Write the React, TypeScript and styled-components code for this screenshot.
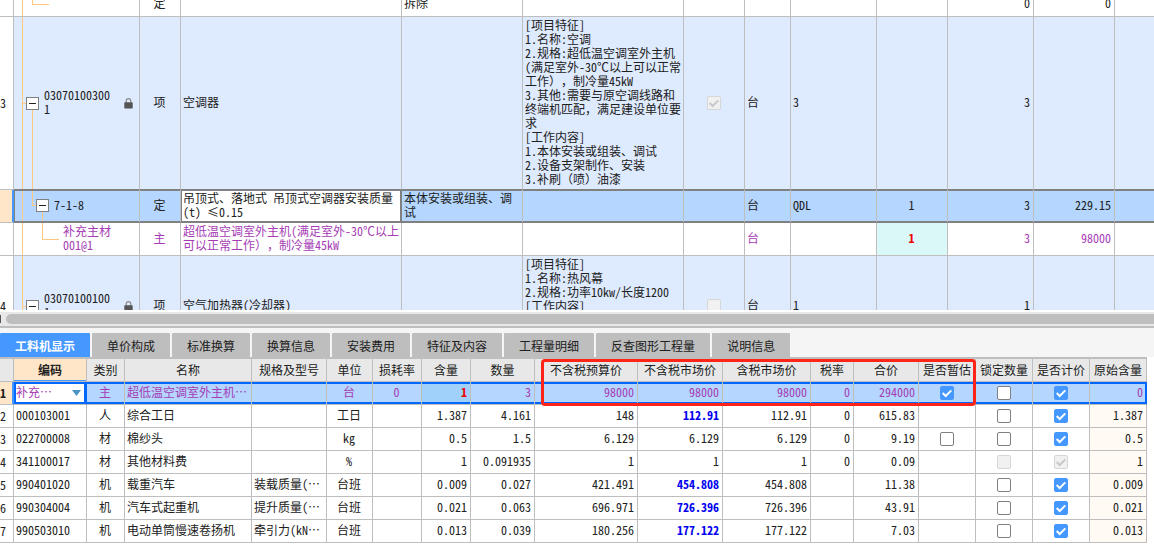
import React from "react";
import styled, { createGlobalStyle, css } from "styled-components";

const c = {
  grid: "#bebebe",
  rowBlue: "#deeafe",
  selected: "#b4d6ff",
  accent: "#4498ff",
  outline: "#0068ff",
  dark: "#808080",
  purple: "#a53cb4",
  header: "#e8e8e8",
  orange: "#ffe6c8",
  branch: "#ffca80",
  text: "#202020",
};

const GlobalStyle = createGlobalStyle`
  *, *::before, *::after { box-sizing: border-box; }
  body { margin: 0; background: #fff; }
  body, button, select {
    font-family: "Noto Sans CJK SC", sans-serif;
    font-size: 12px;
    line-height: 14px;
    font-feature-settings: "hwid" 1;
    text-spacing-trim: space-all;
    color: ${c.text};
  }
`;

const Page = styled.main`
  display: flex;
  flex-direction: column;
  height: 100vh;
  overflow: hidden;
`;

const UpperPane = styled.section`
  flex: 1 1 0;
  min-height: 0;
  overflow: hidden;
`;

const LowerPane = styled.section`
  flex: none;
  padding-bottom: 7px;
`;

const Table = styled.table<{ $fill?: boolean }>`
  table-layout: fixed;
  border-collapse: separate;
  border-spacing: 0;
  width: ${(p) => (p.$fill ? "100%" : "1px")};
`;

const BillTable = styled(Table)`
  margin-top: -8px;

  td:last-child { border-right: 0; }
`;

const Col = styled.col<{ $w?: number }>`
  width: ${(p) => (p.$w ? `${p.$w}px` : "auto")};
`;

/* punctuation that keeps its full width beside half-width digits */
const Wide = styled.span`
  font-feature-settings: normal;
`;

/* an ellipsis shaped apart from the Latin letters before it */
const Dots = styled(Wide)`
  display: inline-block;
`;

const Text = ({ children }: { children: string }) => (
  <>
    {children.split(/([（），≤]+)/).map((part, i) => (i % 2 ? <Wide key={i}>{part}</Wide> : part))}
  </>
);

const Clipped = ({ children = "" }: { children?: string }) =>
  children.endsWith("…") ? <>{children.slice(0, -1)}<Dots lang="zh-CN">…</Dots></> : <>{children}</>;

type Align = "left" | "center" | "right";

const cell = css<{ $align?: Align }>`
  padding: 0 ${(p) => (p.$align === "right" ? 3 : 1)}px 2px ${(p) => (p.$align === "center" ? 0 : 2)}px;
  border-right: 1px solid ${c.grid};
  border-bottom: 1px solid ${c.grid};
  text-align: ${(p) => p.$align ?? "left"};
  vertical-align: middle;
  font-weight: normal;
`;

const Td = styled.td<{ $align?: Align; $bg?: string; $red?: boolean; $blue?: boolean }>`
  ${cell}
  ${(p) => p.$bg && `&& { background-color: ${p.$bg}; }`}
  ${(p) => p.$red && "color: #f00000; font-weight: bold;"}
  ${(p) => p.$blue && "color: #0000f0; font-weight: bold;"}
`;

const CheckTd = styled(Td)`
  padding: 0;
`;

const RowHead = styled.th<{ $on?: boolean }>`
  ${cell}
  text-align: left;
  padding: 0;
  color: ${c.text};
  background: ${(p) => (p.$on ? c.orange : "#fff")};
  font-weight: ${(p) => (p.$on ? "bold" : "normal")};
  box-shadow: ${(p) => (p.$on ? `inset -1px 0 ${c.accent}` : "none")};
  border-right-color: ${(p) => (p.$on ? c.accent : c.grid)};
`;

/* upper grid */

const BillRow = styled.tr<{ $h: number; $tone?: "blue" | "selected" | "material"; $last?: boolean }>`
  height: ${(p) => p.$h}px;
  ${(p) => p.$tone === "blue" && `& > td { background-color: ${c.rowBlue}; }`}
  ${(p) => p.$tone === "material" && `color: ${c.purple};`}
  ${(p) =>
    p.$tone === "selected" &&
    `& > td {
      background-color: ${c.selected};
      border-bottom: 2px solid ${c.dark};
      box-shadow: inset 0 1px ${c.dark};
    }
    & > td:nth-child(2) { border-left: 1px solid ${c.dark}; }`}
  ${(p) => p.$last && `& > td { border-bottom-color: ${c.dark}; }`}
`;

const EditingTd = styled(Td)`
  && {
    background-color: #fff;
    border-left: 1px solid ${c.dark};
    border-right: 2px solid ${c.dark};
    padding: 0 0 2px 1px;
  }
`;

const FeatureTd = styled(Td)`
  vertical-align: top;
  padding: 1px 0 1px 2px;
  white-space: pre-line;
`;

/* tree guides: each stroke is [x, y, width, height] */
type Branch = "leafTop" | "item" | "sub" | "leaf" | "next";

const branches: Record<Branch, [string, string, string, string][]> = {
  leafTop: [["8px", "0", "1px", "100%"], ["18px", "0", "1px", "12px"], ["18px", "12px", "17px", "1px"]],
  item: [["8px", "0", "1px", "100%"], ["8px", "50%", "6px", "1px"], ["18px", "100%", "1px", "50%"]],
  sub: [["7px", "0", "1px", "100%"], ["17px", "0", "1px", "50%"], ["17px", "50%", "6px", "1px"], ["27px", "100%", "1px", "50%"]],
  leaf: [["8px", "0", "1px", "100%"], ["28px", "0", "1px", "50%"], ["28px", "50%", "17px", "1px"]],
  next: [["8px", "0", "1px", "100%"], ["8px", "50%", "6px", "1px"]],
};

const TreeTd = styled(Td)<{ $branch: Branch; $indent: number }>`
  padding: 0 0 0 ${(p) => p.$indent}px;
  background-image: ${(p) => branches[p.$branch].map(() => `linear-gradient(${c.branch}, ${c.branch})`).join(", ")};
  background-position: ${(p) => branches[p.$branch].map(([x, y]) => `${x} ${y}`).join(", ")};
  background-size: ${(p) => branches[p.$branch].map(([, , w, h]) => `${w} ${h}`).join(", ")};
  background-repeat: no-repeat;
`;

const TreeLine = styled.div`
  display: flex;
  align-items: center;
  gap: 5px;
`;

const Code = styled.span<{ $w?: number }>`
  width: ${(p) => p.$w ?? 68}px;
  padding-bottom: 2px;
  word-break: break-all;
`;

const ToggleButton = styled.button`
  display: grid;
  place-items: center;
  flex: none;
  width: 13px;
  height: 13px;
  padding: 0;
  border: 1px solid ${c.dark};
  background: #fff;

  &::before {
    content: "";
    width: 7px;
    height: 1px;
    background: ${c.text};
  }
`;

const LockSvg = styled.svg`
  flex: none;
  margin-left: 7px;
`;

const Lock = () => (
  <LockSvg width="9" height="11" viewBox="0 0 9 11" aria-hidden="true">
    <path d="M2.2 5V3a2.3 2.3 0 0 1 4.6 0v2" fill="none" stroke="#8c8c8c" strokeWidth="1.2" />
    <rect x="0.3" y="4.2" width="8.4" height="6.4" rx="0.8" fill="#555" />
  </LockSvg>
);

/* check boxes */

const CheckWrap = styled.span`
  position: relative;
  display: block;
  width: 14px;
  height: 14px;
  margin: 0 auto;
`;

const CheckInput = styled.input`
  appearance: none;
  display: block;
  width: 14px;
  height: 14px;
  margin: 0;
  border: 1px solid ${c.dark};
  border-radius: 2px;
  background: #fff;

  &:checked {
    border-color: ${c.accent};
    background: ${c.accent};
  }
  &:disabled {
    border-color: #d6d6d6;
    background: #f1f1f1;
  }
`;

const Tick = styled.svg<{ $off?: boolean }>`
  position: absolute;
  inset: 0;
  pointer-events: none;
  fill: none;
  stroke: ${(p) => (p.$off ? "#c8c8c8" : "#fff")};
  stroke-width: 2;
`;

const Check = ({ on, off, label }: { on?: boolean; off?: boolean; label: string }) => (
  <CheckWrap>
    <CheckInput type="checkbox" defaultChecked={on} disabled={off} aria-label={label} />
    {on && (
      <Tick $off={off} width="14" height="14" viewBox="0 0 14 14" aria-hidden="true">
        <path d="M2.7 7l3 3 5.600-5.600" />
      </Tick>
    )}
  </CheckWrap>
);

/* scroll bar and tabs */

const ScrollTrack = styled.div`
  display: flex;
  align-items: center;
  gap: 5px;
  height: 18px;
  border-top: 2px solid #fff;
  border-bottom: 2px solid ${c.grid};
  background: ${c.header};
`;

const ScrollArrow = styled.span`
  width: 1px;
  height: 8px;
  background: #555;
`;

const ScrollThumb = styled.div`
  flex: 1;
  height: 10px;
  border-radius: 5px 0 0 5px;
  background: ${c.grid};
`;

const Tabs = styled.nav`
  display: flex;
  gap: 2px;
  padding-top: 5px;
  background: #f5f5f5;
`;

const Tab = styled.button<{ $on?: boolean }>`
  height: 24px;
  padding: 2px 15px 0;
  border: 0;
  border-radius: 1px 1px 0 0;
  white-space: nowrap;
  background: ${(p) => (p.$on ? c.accent : c.grid)};
  color: ${(p) => (p.$on ? "#fff" : c.text)};
  font-weight: ${(p) => (p.$on ? "bold" : "normal")};
`;

/* lower grid */

const Sheet = styled.div`
  position: relative;
  width: max-content;
  border-top: 2px solid ${c.grid};
`;

const Highlight = styled.div`
  position: absolute;
  top: 0;
  left: 541px;
  width: 435px;
  height: 47px;
  border: 3px solid #ff2418;
  border-radius: 4px;
  pointer-events: none;
`;

const HeadTh = styled.th<{ $on?: boolean; $align?: Align }>`
  ${cell}
  padding: 0;
  text-align: center;
  white-space: nowrap;
  background: ${(p) => (p.$on ? c.orange : c.header)};
  font-weight: ${(p) => (p.$on ? "bold" : "normal")};
  box-shadow: ${(p) => (p.$on ? `inset 0 -1px ${c.accent}` : "none")};
`;

const LineRow = styled.tr<{ $on?: boolean }>`
  height: 23px;
  & > td { white-space: nowrap; overflow: hidden; }
  & > td:last-child { background-color: #fffaf4; }
  ${(p) =>
    p.$on &&
    css`
      color: ${c.purple};
      & > td {
        background-color: ${c.selected};
        box-shadow: inset 0 2px ${c.outline}, inset 0 -2px ${c.outline};
      }
      & > td:nth-child(2) {
        padding: 0 2px;
        background-color: #fff;
        border-right-color: ${c.outline};
        box-shadow: inset 0 0 0 2px ${c.outline};
      }
      & > td:nth-child(8) { background-color: #9fd1fb; }
      & > td:last-child {
        background-color: ${c.selected};
        border-right-color: ${c.outline};
        box-shadow: inset 0 2px ${c.outline}, inset 0 -2px ${c.outline}, inset -1px 0 ${c.outline};
      }
    `}
`;

const PickWrap = styled.span`
  display: flex;
  align-items: center;
  justify-content: space-between;
  padding-right: 3px;
`;

const Pick = styled.select`
  appearance: none;
  width: 52px;
  height: 16px;
  padding: 0 0 2px;
  border: 0;
  background: transparent;
  color: ${c.purple};
`;

const Arrow = () => (
  <svg width="9" height="6" viewBox="0 0 9 6" aria-hidden="true">
    <path d="M0 0h9L4.500 6z" fill="#4c94c4" />
  </svg>
);

const billCols = [14, 126, 41, 221, 121, 161, 61, 46, 86, 71, 86, 81];
const lineCols = [14, 73, 38, 127, 75, 46, 49, 49, 64, 103, 85, 88, 43, 65, 57, 57, 57, 57];
const heads = ["类别", "名称", "规格及型号", "单位", "损耗率", "含量", "数量", "不含税预算价", "不含税市场价", "含税市场价", "税率", "合价", "是否暂估", "锁定数量", "是否计价", "原始含量"];
const tabs = ["工料机显示", "单价构成", "标准换算", "换算信息", "安装费用", "特征及内容", "工程量明细", "反查图形工程量", "说明信息"];

const itemFeatures = `[项目特征]
1.名称:空调
2.规格:超低温空调室外主机(满足室外-30℃以上可以正常工作），制冷量45kW
3.其他:需要与原空调线路和终端机匹配，满足建设单位要求
[工作内容]
1.本体安装或组装、调试
2.设备支架制作、安装
3.补刷（喷）油漆`;

const nextFeatures = `[项目特征]
1.名称:热风幕
2.规格:功率10kw/长度1200
[工作内容]`;

interface Line {
  code: string; kind: string; name: string; spec?: string; unit: string; loss?: string;
  use: string; qty: string; budget: string; market: string; taxed: string; rate?: string; total: string;
  bold?: boolean; estimate?: "on" | "off"; locked?: boolean; origin: string;
}

const lines: Line[] = [
  { code: "补充…", kind: "主", name: "超低温空调室外主机…", unit: "台", loss: "0", use: "1", qty: "3", budget: "98000", market: "98000", taxed: "98000", rate: "0", total: "294000", estimate: "on", origin: "0" },
  { code: "000103001", kind: "人", name: "综合工日", unit: "工日", use: "1.387", qty: "4.161", budget: "148", market: "112.91", taxed: "112.91", rate: "0", total: "615.83", bold: true, origin: "1.387" },
  { code: "022700008", kind: "材", name: "棉纱头", unit: "kg", use: "0.5", qty: "1.5", budget: "6.129", market: "6.129", taxed: "6.129", rate: "0", total: "9.19", estimate: "off", origin: "0.5" },
  { code: "341100017", kind: "材", name: "其他材料费", unit: "%", use: "1", qty: "0.091935", budget: "1", market: "1", taxed: "1", rate: "0", total: "0.09", locked: true, origin: "1" },
  { code: "990401020", kind: "机", name: "载重汽车", spec: "装载质量(…", unit: "台班", use: "0.009", qty: "0.027", budget: "421.491", market: "454.808", taxed: "454.808", total: "11.38", bold: true, origin: "0.009" },
  { code: "990304004", kind: "机", name: "汽车式起重机", spec: "提升质量(…", unit: "台班", use: "0.021", qty: "0.063", budget: "696.971", market: "726.396", taxed: "726.396", total: "43.91", bold: true, origin: "0.021" },
  { code: "990503010", kind: "机", name: "电动单筒慢速卷扬机", spec: "牵引力(kN…", unit: "台班", use: "0.013", qty: "0.039", budget: "180.256", market: "177.122", taxed: "177.122", total: "7.03", bold: true, origin: "0.013" },
];

const Bill = () => (
  <BillTable $fill>
    <colgroup>
      {billCols.map((w, i) => <Col key={i} $w={w} />)}
      <Col />
    </colgroup>
    <tbody>
      <BillRow $h={25}>
        <RowHead />
        <TreeTd $branch="leafTop" $indent={49} />
        <Td $align="center">定</Td>
        <Td />
        <Td>拆除</Td>
        <Td /><Td /><Td /><Td /><Td />
        <Td $align="right">0</Td>
        <Td $align="right">0</Td>
        <Td />
      </BillRow>
      <BillRow $h={173} $tone="blue" $last>
        <RowHead scope="row">3</RowHead>
        <TreeTd $branch="item" $indent={12}>
          <TreeLine><ToggleButton aria-label="折叠" /><Code>030701003001</Code><Lock /></TreeLine>
        </TreeTd>
        <Td $align="center">项</Td>
        <Td>空调器</Td>
        <Td />
        <FeatureTd><Text>{itemFeatures}</Text></FeatureTd>
        <CheckTd><Check on off label="空调器" /></CheckTd>
        <Td>台</Td>
        <Td>3</Td>
        <Td />
        <Td $align="right">3</Td>
        <Td /><Td />
      </BillRow>
      <BillRow $h={33} $tone="selected">
        <RowHead $on />
        <TreeTd $branch="sub" $indent={21}>
          <TreeLine><ToggleButton aria-label="折叠" /><Code>7-1-8</Code></TreeLine>
        </TreeTd>
        <Td $align="center">定</Td>
        <EditingTd><Text>吊顶式、落地式 吊顶式空调器安装质量(t) ≤0.15</Text></EditingTd>
        <Td>本体安装或组装、调试</Td>
        <Td /><Td />
        <Td>台</Td>
        <Td>QDL</Td>
        <Td $align="center">1</Td>
        <Td $align="right">3</Td>
        <Td $align="right">229.15</Td>
        <Td />
      </BillRow>
      <BillRow $h={33} $tone="material">
        <RowHead />
        <TreeTd $branch="leaf" $indent={49}>
          <TreeLine><Code $w={50}>补充主材001@1</Code></TreeLine>
        </TreeTd>
        <Td $align="center">主</Td>
        <Td><Text>超低温空调室外主机(满足室外-30℃以上可以正常工作），制冷量45kW</Text></Td>
        <Td /><Td /><Td />
        <Td>台</Td>
        <Td />
        <Td $align="center" $bg="#daf8f8" $red>1</Td>
        <Td $align="right">3</Td>
        <Td $align="right">98000</Td>
        <Td />
      </BillRow>
      <BillRow $h={101} $tone="blue">
        <RowHead scope="row">4</RowHead>
        <TreeTd $branch="next" $indent={12}>
          <TreeLine><ToggleButton aria-label="折叠" /><Code>030701001001</Code><Lock /></TreeLine>
        </TreeTd>
        <Td $align="center">项</Td>
        <Td>空气加热器(冷却器)</Td>
        <Td />
        <FeatureTd>{nextFeatures}</FeatureTd>
        <CheckTd><Check off label="空气加热器" /></CheckTd>
        <Td>台</Td>
        <Td>1</Td>
        <Td />
        <Td $align="right">1</Td>
        <Td /><Td />
      </BillRow>
    </tbody>
  </BillTable>
);

const Lines = () => (
  <Table>
    <colgroup>{lineCols.map((w, i) => <Col key={i} $w={w} />)}</colgroup>
    <thead>
      <LineRow>
        <HeadTh />
        <HeadTh $on>编码</HeadTh>
        {heads.map((h) => <HeadTh key={h}>{h}</HeadTh>)}
      </LineRow>
    </thead>
    <tbody>
      {lines.map((l, i) => (
        <LineRow key={l.code} $on={i === 0}>
          <RowHead scope="row" $on={i === 0}>{i + 1}</RowHead>
          <Td>
            {i === 0 ? (
              <PickWrap>
                <Pick aria-label="编码"><option>{l.code}</option></Pick>
                <Arrow />
              </PickWrap>
            ) : l.code}
          </Td>
          <Td $align="center">{l.kind}</Td>
          <Td>{l.name}</Td>
          <Td><Clipped>{l.spec}</Clipped></Td>
          <Td $align="center">{l.unit}</Td>
          <Td $align="center">{l.loss}</Td>
          <Td $align="right" $red={i === 0}>{l.use}</Td>
          <Td $align="right">{l.qty}</Td>
          <Td $align="right">{l.budget}</Td>
          <Td $align="right" $blue={l.bold}>{l.market}</Td>
          <Td $align="right">{l.taxed}</Td>
          <Td $align="right">{l.rate}</Td>
          <Td $align="right">{l.total}</Td>
          <CheckTd>{l.estimate && <Check on={l.estimate === "on"} label="是否暂估" />}</CheckTd>
          <CheckTd><Check off={l.locked} label="锁定数量" /></CheckTd>
          <CheckTd><Check on off={l.locked} label="是否计价" /></CheckTd>
          <Td $align="right">{l.origin}</Td>
        </LineRow>
      ))}
    </tbody>
  </Table>
);

export default function App() {
  return (
    <Page>
      <GlobalStyle />
      <UpperPane><Bill /></UpperPane>
      <LowerPane>
        <ScrollTrack><ScrollArrow /><ScrollThumb /></ScrollTrack>
        <Tabs>{tabs.map((t, i) => <Tab key={t} $on={i === 0}>{t}</Tab>)}</Tabs>
        <Sheet>
          <Lines />
          <Highlight />
        </Sheet>
      </LowerPane>
    </Page>
  );
}
